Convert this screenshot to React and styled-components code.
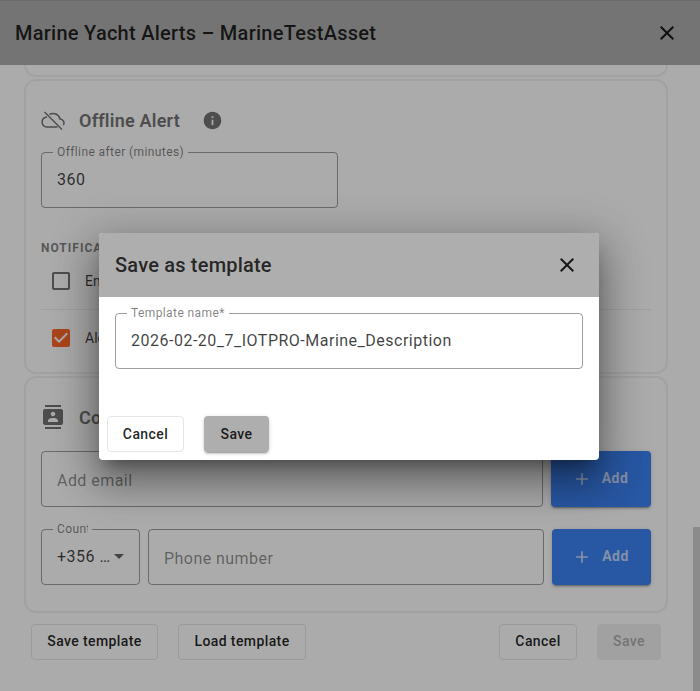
import React from "react";
import styled, { createGlobalStyle } from "styled-components";
import {
  MdAdd,
  MdArrowDropDown,
  MdCheckBox,
  MdCheckBoxOutlineBlank,
  MdClose,
  MdContacts,
  MdInfo
} from "react-icons/md";

const GlobalStyle = createGlobalStyle`
  html, body {
    margin: 0;
    padding: 0;
    height: 100%;
    overflow: hidden;
    background: #fff;
    font-family: Roboto, "Liberation Sans", sans-serif;
  }
  * {
    box-sizing: border-box;
  }
`;

const Page = styled.div`
  height: 691px;
  display: flex;
  flex-direction: column;
  position: relative;
  overflow: hidden;
  background: #fff;
`;

const Header = styled.header`
  flex: none;
  height: 65px;
  display: flex;
  align-items: center;
  justify-content: space-between;
  padding: 0 21px 0 15px;
  background: #aeaeae;
  border-top: 1px solid #a0a0a0;
`;

const HeaderTitle = styled.h2`
  margin: 0;
  font-size: 20px;
  font-weight: 500;
  letter-spacing: 0.26px;
  color: rgba(0, 0, 0, 0.82);
`;

const IconButton = styled.button`
  display: flex;
  padding: 0;
  border: 0;
  background: none;
  color: rgba(0, 0, 0, 0.87);
  font-size: 24px;
`;

const Content = styled.main`
  flex: 1;
  display: flex;
  flex-direction: column;
  padding: 0 32px 0 24px;
`;

const ClippedCard = styled.div`
  flex: none;
  height: 12px;
  border: 2px solid #f0f0f0;
  border-top: 0;
  border-radius: 0 0 12px 12px;
  margin-bottom: 2px;
`;

const Card = styled.section`
  flex: none;
  height: ${(p) => p.$height}px;
  margin-bottom: 2px;
  padding: 23px 15px 0;
  border: 2px solid #f0f0f0;
  border-radius: 12px;
`;

const CardHeading = styled.div`
  display: flex;
  align-items: center;
  height: 32px;
  margin-bottom: ${(p) => p.$gap}px;
  color: #747474;
`;

const HeadingIcon = styled.span`
  display: flex;
  width: 38px;
  font-size: 24px;
`;

const HeadingText = styled.h3`
  margin: 0;
  font-size: 18px;
  font-weight: 600;
  letter-spacing: 0.22px;
  color: #747474;
`;

const InfoIcon = styled(MdInfo)`
  margin-left: 22px;
  font-size: 21px;
  color: #747474;
`;

const Field = styled.div`
  position: relative;
  flex: ${(p) => (p.$width ? "none" : 1)};
  width: ${(p) => (p.$width ? `${p.$width}px` : "auto")};
  height: 56px;
  display: flex;
  align-items: center;
  padding: 0 15px 2px;
  border: 1px solid rgba(0, 0, 0, 0.38);
  border-radius: 4px;
  font-size: 16px;
  letter-spacing: 0.5px;
  color: rgba(0, 0, 0, 0.75);
`;

const FieldLabel = styled.label`
  position: absolute;
  top: -8px;
  left: 11px;
  padding: 0 4px;
  background: #fff;
  font-size: 12px;
  line-height: 14px;
  letter-spacing: 0.4px;
  color: rgba(0, 0, 0, 0.5);
`;

const ClippedLabelText = styled.span`
  display: block;
  width: 31px;
  overflow: hidden;
  white-space: nowrap;
`;

const Placeholder = styled.span`
  padding-top: 4px;
  letter-spacing: 0.45px;
  color: rgba(0, 0, 0, 0.45);
`;

const SelectValue = styled.span`
  flex: 1;
  white-space: nowrap;
`;

const Caret = styled(MdArrowDropDown)`
  flex: none;
  margin: 0 -3px 0 -4px;
  font-size: 24px;
  color: rgba(0, 0, 0, 0.6);
`;

const SectionLabel = styled.div`
  margin: 33px 0 -2px;
  font-size: 12px;
  line-height: 14px;
  font-weight: 700;
  letter-spacing: 1px;
  color: rgba(0, 0, 0, 0.5);
`;

const CheckRow = styled.div`
  display: flex;
  align-items: center;
  height: ${(p) => (p.$divider ? 57 : 56)}px;
  padding-left: 8px;
  border-bottom: ${(p) => (p.$divider ? "1px solid #eee" : "0")};
  font-size: 14px;
  color: rgba(0, 0, 0, 0.75);
`;

const CheckIcon = styled.span`
  display: flex;
  width: 36px;
  font-size: 24px;
  color: ${(p) => (p.$checked ? "#ff6829" : "rgba(0,0,0,0.55)")};
`;

const ContactRow = styled.div`
  display: flex;
  gap: 8px;
  margin-bottom: 22px;
`;

const AddButton = styled.button`
  flex: none;
  width: ${(p) => p.$width}px;
  height: 56px;
  display: flex;
  align-items: center;
  justify-content: center;
  gap: 10px;
  padding: 0 2px 0 0;
  border: 0;
  border-radius: 4px;
  background: #3d82f4;
  color: rgba(255, 255, 255, 0.7);
  font-family: inherit;
  font-size: 14px;
  font-weight: 700;
  letter-spacing: 0.4px;
  box-shadow: 0 3px 1px -2px rgba(0, 0, 0, 0.2), 0 2px 2px 0 rgba(0, 0, 0, 0.14),
    0 1px 5px 0 rgba(0, 0, 0, 0.12);

  svg {
    font-size: 20px;
  }
`;

const AddLabel = styled.span`
  padding-bottom: 2px;
`;

const Button = styled.button`
  flex: none;
  height: 36px;
  width: ${(p) => p.$width}px;
  margin-left: ${(p) => p.$gap || 0}px;
  padding: 0;
  border: 1px solid ${(p) => (p.$disabled || p.$raised ? "transparent" : "#e6e6e6")};
  border-radius: 4px;
  background: ${(p) => (p.$raised ? "#aeaeae" : p.$disabled ? "#f0f0f0" : "transparent")};
  color: ${(p) => (p.$disabled ? "rgba(0,0,0,0.3)" : "rgba(0,0,0,0.87)")};
  font-family: inherit;
  font-size: 14px;
  font-weight: 500;
  letter-spacing: 0.4px;
  box-shadow: ${(p) =>
    p.$raised
      ? "0 3px 1px -2px rgba(0,0,0,.2), 0 2px 2px 0 rgba(0,0,0,.14), 0 1px 5px 0 rgba(0,0,0,.12)"
      : "none"};
`;

const Footer = styled.footer`
  display: flex;
  align-items: center;
  margin-top: 9px;
  padding: 0 7px;

  ${Button} {
    padding-bottom: 2px;
  }
`;

const Spacer = styled.div`
  flex: 1;
`;

const ScrollThumb = styled.div`
  position: absolute;
  right: 0;
  bottom: 0;
  width: 7px;
  height: 164px;
  background: #cfcfcf;
`;

const Backdrop = styled.div`
  position: absolute;
  inset: 0;
  display: flex;
  align-items: center;
  justify-content: center;
  padding: 2px 2px 0 0;
  background: rgba(0, 0, 0, 0.33);
`;

const Modal = styled.div`
  width: 500px;
  height: 227px;
  display: flex;
  flex-direction: column;
  overflow: hidden;
  border-radius: 4px;
  background: #fff;
  box-shadow: 0 11px 15px -7px rgba(0, 0, 0, 0.35), 0 24px 38px 3px rgba(0, 0, 0, 0.25),
    0 9px 46px 8px rgba(0, 0, 0, 0.2);
`;

const ModalHeader = styled.div`
  flex: none;
  height: 64px;
  display: flex;
  align-items: center;
  justify-content: space-between;
  padding: 0 20px 0 16px;
  background: #aeaeae;
`;

const ModalTitle = styled.h2`
  margin: 0;
  font-size: 20px;
  font-weight: 500;
  letter-spacing: 0.2px;
  color: rgba(0, 0, 0, 0.8);
`;

const ModalBody = styled.div`
  flex: 1;
  padding: 16px 16px 0;
`;

const ModalActions = styled.div`
  flex: none;
  display: flex;
  padding: 0 8px 8px;
`;

const CloudOffIcon = () => (
  <svg
    width="1em"
    height="1em"
    viewBox="0 0 24 24"
    fill="none"
    stroke="currentColor"
    strokeWidth="1.5"
  >
    <path d="M3.5 4 21 21.5" />
    <path d="M16.5 19H5.8a5 5 0 0 1-1-9.8L6 9" />
    <path d="M8.5 6.5A7 7 0 0 1 19 11a4 4 0 0 1 3.3 6.2" />
  </svg>
);

const App = () => (
  <Page>
    <GlobalStyle />
    <Header>
      <HeaderTitle>Marine Yacht Alerts – MarineTestAsset</HeaderTitle>
      <IconButton aria-label="Close">
        <MdClose />
      </IconButton>
    </Header>
    <Content>
      <ClippedCard />
      <Card $height={295}>
        <CardHeading $gap={16}>
          <HeadingIcon>
            <CloudOffIcon />
          </HeadingIcon>
          <HeadingText>Offline Alert</HeadingText>
          <InfoIcon />
        </CardHeading>
        <Field $width={297}>
          <FieldLabel>Offline after (minutes)</FieldLabel>
          360
        </Field>
        <SectionLabel>NOTIFICATIONS</SectionLabel>
        <CheckRow $divider>
          <CheckIcon>
            <MdCheckBoxOutlineBlank />
          </CheckIcon>
          Email
        </CheckRow>
        <CheckRow>
          <CheckIcon $checked>
            <MdCheckBox />
          </CheckIcon>
          Alert
        </CheckRow>
      </Card>
      <Card $height={237}>
        <CardHeading $gap={18}>
          <HeadingIcon>
            <MdContacts />
          </HeadingIcon>
          <HeadingText>Contacts</HeadingText>
        </CardHeading>
        <ContactRow>
          <Field>
            <Placeholder>Add email</Placeholder>
          </Field>
          <AddButton $width={100}>
            <MdAdd />
            <AddLabel>Add</AddLabel>
          </AddButton>
        </ContactRow>
        <ContactRow>
          <Field $width={99}>
            <FieldLabel>
              <ClippedLabelText>Country</ClippedLabelText>
            </FieldLabel>
            <SelectValue>+356 …</SelectValue>
            <Caret />
          </Field>
          <Field>
            <Placeholder>Phone number</Placeholder>
          </Field>
          <AddButton $width={99}>
            <MdAdd />
            <AddLabel>Add</AddLabel>
          </AddButton>
        </ContactRow>
      </Card>
      <Footer>
        <Button $width={127}>Save template</Button>
        <Button $width={128} $gap={20}>
          Load template
        </Button>
        <Spacer />
        <Button $width={78}>Cancel</Button>
        <Button $width={64} $gap={20} $disabled>
          Save
        </Button>
      </Footer>
    </Content>
    <ScrollThumb />
    <Backdrop>
      <Modal>
        <ModalHeader>
          <ModalTitle>Save as template</ModalTitle>
          <IconButton aria-label="Close">
            <MdClose />
          </IconButton>
        </ModalHeader>
        <ModalBody>
          <Field>
            <FieldLabel>Template name*</FieldLabel>
            2026-02-20_7_IOTPRO-Marine_Description
          </Field>
        </ModalBody>
        <ModalActions>
          <Button $width={77}>Cancel</Button>
          <Button $width={65} $gap={20} $raised>
            Save
          </Button>
        </ModalActions>
      </Modal>
    </Backdrop>
  </Page>
);

export default App;
